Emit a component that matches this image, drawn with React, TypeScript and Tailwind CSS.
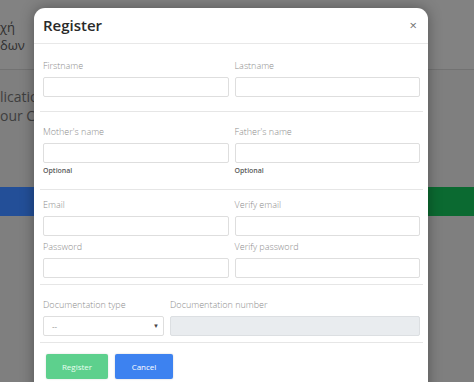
import React from "react";

const font = { fontFamily: '"Open Sans", "Noto Sans", sans-serif' };

function Field({ label, hint }: { label: string; hint?: string }) {
  return (
    <div className="flex flex-col">
      <label className="h-[12px] text-[9px] leading-[12px] font-light text-[#8d8d8d]">
        {label}
      </label>
      <input className="mt-[5px] h-[20px] w-full rounded-[2px] border border-[#dedede] bg-white" />
      {hint && (
        <span className="mt-[3px] h-[10px] text-[7px] leading-[10px] font-semibold text-[#5a5a5a]">
          {hint}
        </span>
      )}
    </div>
  );
}

function Divider() {
  return <div className="mx-[-3px] h-px bg-[#e6e6e6]" />;
}

export default function App() {
  return (
    <div
      className="relative h-[382px] w-[474px] overflow-hidden bg-[#7f7f7f]"
      style={font}
    >
      {/* page behind the dialog */}
      <div className="flex h-[70px] flex-col justify-center border-b border-[#727272] bg-[#828282] pt-[3px] text-[13px] leading-[18px] text-[#2f2f2f]">
        <span>χή</span>
        <span>δων</span>
      </div>
      <div className="mt-[17px] flex flex-col text-[14px] leading-[19px] text-[#3e3e3e]">
        <span>lication</span>
        <span>our Cr</span>
      </div>
      <div className="mt-[62px] flex h-[29px]">
        <div className="w-[40px] bg-[#234f98]" />
        <div className="flex-1" />
        <div className="w-[60px] bg-[#0b6a31]" />
      </div>

      {/* dialog */}
      <div className="absolute left-[34px] top-[8px] w-[394px] rounded-t-[11px] bg-white pb-[20px] shadow-[0_0_14px_rgba(0,0,0,0.35)]">
        <div className="flex h-[36px] items-center justify-between border-b border-[#e8e8e8] pl-[9px] pr-[11px]">
          <h2 className="text-[15px] font-semibold text-[#2a2a2a]">Register</h2>
          <span className="text-[13px] leading-none text-[#707070]">×</span>
        </div>

        <div className="flex flex-col pl-[9px] pr-[8px]">
          <div className="grid grid-cols-2 gap-[6px] pt-[16px] pb-[14px]">
            <Field label="Firstname" />
            <Field label="Lastname" />
          </div>
          <Divider />
          <div className="grid grid-cols-2 gap-[6px] pt-[14px] pb-[13px]">
            <Field label="Mother's name" hint="Optional" />
            <Field label="Father's name" hint="Optional" />
          </div>
          <Divider />
          <div className="grid grid-cols-2 gap-x-[6px] gap-y-[5px] pt-[9px] pb-[6px]">
            <Field label="Email" />
            <Field label="Verify email" />
            <Field label="Password" />
            <Field label="Verify password" />
          </div>
          <Divider />
          <div className="flex gap-[6px] pt-[14px] pb-[6px]">
            <div className="flex w-[121px] flex-col">
              <label className="h-[12px] text-[9px] leading-[12px] font-light text-[#8d8d8d]">
                Documentation type
              </label>
              <div className="mt-[5px] flex h-[20px] items-center justify-between rounded-[2px] border border-[#dedede] bg-white pl-[8px] pr-[4px] text-[8px] text-[#8a8a8a]">
                <span>--</span>
                <span className="text-[6px] text-[#444]">▼</span>
              </div>
            </div>
            <div className="flex flex-1 flex-col">
              <label className="h-[12px] text-[9px] leading-[12px] font-light text-[#8d8d8d]">
                Documentation number
              </label>
              <div className="mt-[5px] h-[20px] rounded-[2px] border border-[#dcdfe2] bg-[#e9ecef]" />
            </div>
          </div>
          <Divider />
          <div className="flex gap-[7px] pl-[3px] pt-[11px]">
            <button className="h-[25px] w-[62px] rounded-[2px] bg-[#5dd08d] text-[8px] text-[#e8fff0] shadow-[0_0_2px_rgba(0,0,0,0.15)]">
              Register
            </button>
            <button className="h-[25px] w-[58px] rounded-[2px] bg-[#3d82f0] text-[8px] text-white shadow-[0_0_2px_rgba(0,0,0,0.2)]">
              Cancel
            </button>
          </div>
        </div>
      </div>
    </div>
  );
}
